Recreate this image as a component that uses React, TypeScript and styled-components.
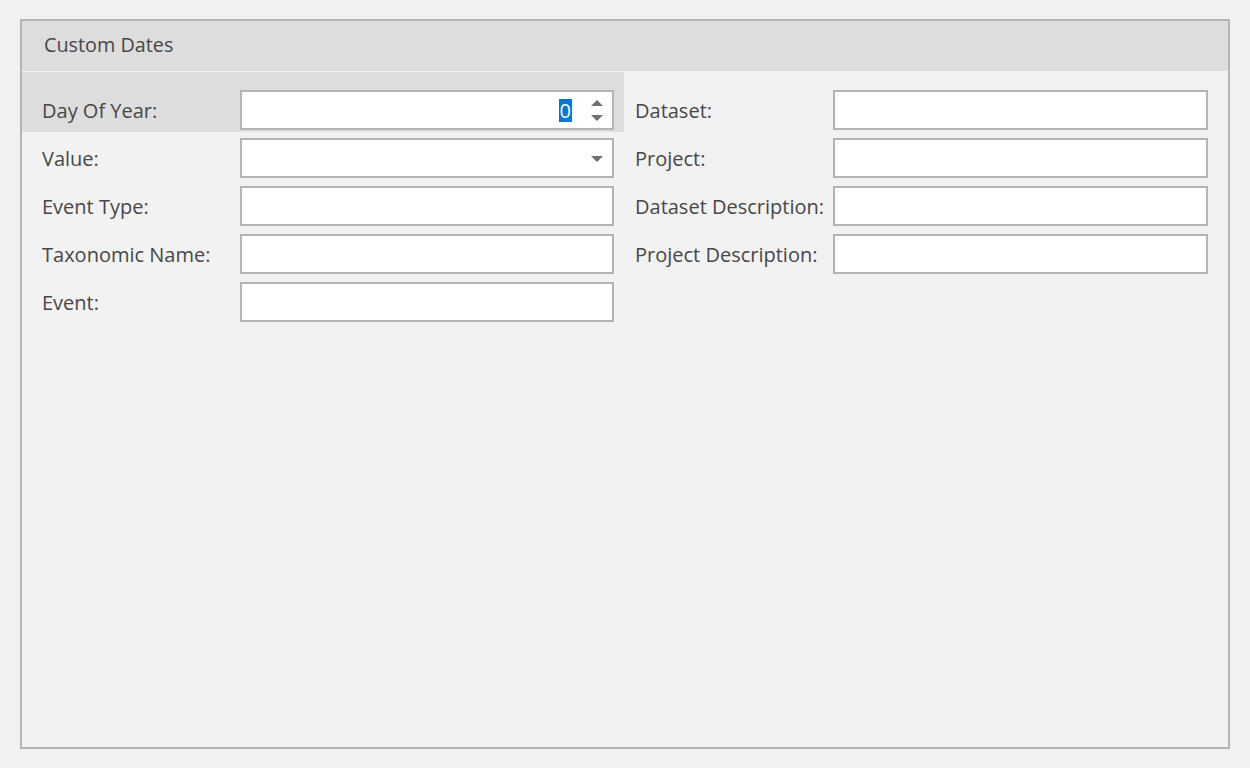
import React from "react";
import styled, { createGlobalStyle } from "styled-components";

const Global = createGlobalStyle`
  html, body { margin: 0; padding: 0; background: #f1f1f1; }
  body { font-family: "Open Sans", "Noto Sans", sans-serif; }
`;

const Page = styled.div`
  width: 1250px;
  height: 768px;
  box-sizing: border-box;
  padding: 19px 20px;
  background: #f1f1f1;
`;

const GroupBox = styled.div`
  width: 1210px;
  height: 730px;
  box-sizing: border-box;
  border: 2px solid #b4b4b4;
  background: #f2f2f2;
  display: flex;
  flex-direction: column;
`;

const Header = styled.div`
  height: 50px;
  flex: none;
  box-sizing: border-box;
  background: #dddddd;
  border-bottom: 1px solid #f4f4f4;
  display: flex;
  align-items: center;
  padding: 0 0 3px 22px;
  height: 51px;
  font-size: 19.8px;
  color: #474747;
`;

const Body = styled.div`
  display: grid;
  grid-template-columns: 602px 1fr;
  align-items: start;
`;

const Column = styled.div<{ $left?: boolean }>`
  display: flex;
  flex-direction: column;
  padding-left: ${(p) => (p.$left ? "20px" : "11px")};
  padding-right: ${(p) => (p.$left ? "10px" : "20px")};
`;

const Item = styled.div<{ $first?: boolean; $focused?: boolean }>`
  display: grid;
  grid-template-columns: 198px 1fr;
  align-items: center;
  padding-top: ${(p) => (p.$first ? "18px" : "0")};
  margin-top: ${(p) => (p.$first ? "0" : "6px")};
  padding-bottom: 2px;
  background: ${(p) => (p.$focused ? "#dddddd" : "transparent")};
  margin-left: ${(p) => (p.$focused ? "-20px" : "0")};
  margin-right: ${(p) => (p.$focused ? "-10px" : "0")};
  padding-left: ${(p) => (p.$focused ? "20px" : "0")};
  padding-right: ${(p) => (p.$focused ? "10px" : "0")};
`;

const Label = styled.div`
  font-size: 20px;
  color: #474747;
  white-space: nowrap;
`;

const Editor = styled.div`
  height: 40px;
  box-sizing: border-box;
  border: 2px solid #b4b4b4;
  background: #ffffff;
  display: flex;
  align-items: center;
  justify-content: flex-end;
  position: relative;
`;

const Selected = styled.span`
  background: #0078d7;
  color: #ffffff;
  font-size: 20px;
  line-height: 23px;
  padding: 0 1px;
  margin-right: 40px;
`;

const Spin = styled.div`
  position: absolute;
  right: 9px;
  top: 0;
  bottom: 0;
  display: flex;
  flex-direction: column;
  justify-content: center;
  gap: 9px;
`;

const DropArrow = styled.div`
  position: absolute;
  right: 9px;
  top: 16px;
`;

const Tri = ({ down }: { down?: boolean }) => (
  <svg width="12" height="6" viewBox="0 0 12 6" style={{ display: "block" }}>
    <path d={down ? "M0 0 L12 0 L6 6 Z" : "M0 6 L12 6 L6 0 Z"} fill="#707070" />
  </svg>
);

const left = ["Day Of Year:", "Value:", "Event Type:", "Taxonomic Name:", "Event:"];
const right = ["Dataset:", "Project:", "Dataset Description:", "Project Description:"];

export default function App() {
  return (
    <>
      <Global />
      <Page>
        <GroupBox>
          <Header>Custom Dates</Header>
          <Body>
            <Column $left>
              {left.map((l, i) => (
                <Item key={l} $first={i === 0} $focused={i === 0}>
                  <Label>{l}</Label>
                  <Editor>
                    {i === 0 && (
                      <>
                        <Selected>0</Selected>
                        <Spin>
                          <Tri />
                          <Tri down />
                        </Spin>
                      </>
                    )}
                    {i === 1 && (
                      <DropArrow>
                        <Tri down />
                      </DropArrow>
                    )}
                  </Editor>
                </Item>
              ))}
            </Column>
            <Column>
              {right.map((l, i) => (
                <Item key={l} $first={i === 0}>
                  <Label>{l}</Label>
                  <Editor />
                </Item>
              ))}
            </Column>
          </Body>
        </GroupBox>
      </Page>
    </>
  );
}
